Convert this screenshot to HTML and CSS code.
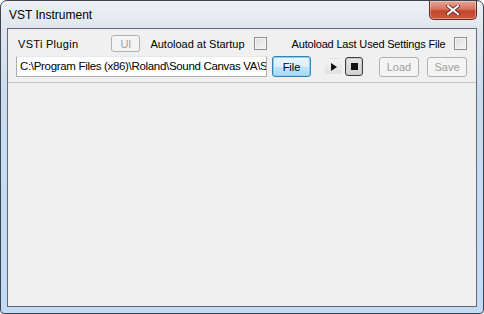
FILE: index.html
```html
<!doctype html>
<html lang="en">
    <head>
        <meta charset="UTF-8" />
        <title>VST Instrument</title>
        <link rel="stylesheet" href="styles.css">
    </head>
    <body>
        <div class="window">
            <div class="titlebar">
                <span class="title">VST Instrument</span>
                <div class="close">
                    <svg width="14" height="10" viewBox="0 0 14 10">
                        <path d="M2 1 L12 9 M12 1 L2 9" stroke="#5a2020" stroke-width="3.6" stroke-linecap="square" />
                        <path d="M2 1 L12 9 M12 1 L2 9" stroke="#fff" stroke-width="2" stroke-linecap="square" />
                    </svg>
                </div>
            </div>
            <div class="client">
                <div class="row">
                    <span class="label plugin">VSTi Plugin</span>
                    <button class="btn small" disabled>UI</button>
                    <span class="label startup">Autoload at Startup</span>
                    <span class="check"></span>
                    <span class="label last">Autoload Last Used Settings File</span>
                    <span class="check"></span>
                </div>
                <div class="row path-row">
                    <div class="path"><span>C:\Program Files (x86)\Roland\Sound Canvas VA\S</span></div>
                    <button class="btn file">File</button>
                    <button class="btn flat play">
                        <svg width="6" height="8" viewBox="0 0 6 8"><path d="M0 0 L6 4 L0 8 Z" fill="#111" /></svg>
                    </button>
                    <button class="btn stop">
                        <svg width="7" height="7" viewBox="0 0 7 7"><rect width="7" height="7" fill="#111" /></svg>
                    </button>
                    <button class="btn wide" disabled>Load</button>
                    <button class="btn wide save" disabled>Save</button>
                </div>
                <div class="sep"></div>
            </div>
        </div>
    </body>
</html>
```

FILE: styles.css
```css
body {
    margin: 0;
    font-family: "Liberation Sans", Arial, sans-serif;
    font-size: 11px;
    color: #000;
}
.window {
    width: 484px;
    height: 314px;
    box-sizing: border-box;
    border: 1px solid #3c4450;
    border-radius: 7px 7px 4px 4px;
    padding: 0 6px 6px 6px;
    display: flex;
    flex-direction: column;
    background: linear-gradient(to bottom, #eef1f5 0px, #dfe5ec 30px, #c9dcf0 90px, #c2dbf5 100%);
}
.titlebar {
    height: 27px;
    display: flex;
    justify-content: space-between;
    align-items: flex-start;
}
.title {
    font-family: "Liberation Sans", Arial, sans-serif;
    font-size: 12px;
    margin: 7px 0 0 2px;
    color: #000;
}
.close {
    width: 46px;
    height: 18px;
    border: 1px solid #5e2a22;
    border-top: none;
    border-radius: 0 0 5px 5px;
    background: linear-gradient(to bottom, #e7a596 0%, #d77361 45%, #c2442c 55%, #cd5a3f 100%);
    display: flex;
    align-items: center;
    justify-content: center;
    box-shadow: inset 0 0 0 1px rgba(255, 255, 255, 0.35);
}
.client {
    flex: 1;
    background: #f0f0f0;
    border: 1px solid #5f6a76;
    display: flex;
    flex-direction: column;
}
.row {
    display: flex;
    align-items: center;
    height: 17px;
    margin-top: 6px;
    padding-left: 10px;
}
.label {
    white-space: nowrap;
}
.plugin {
    letter-spacing: 0.3px;
}
.btn {
    font-family: "Liberation Sans", Arial, sans-serif;
    font-size: 11px;
    height: 21px;
    box-sizing: border-box;
    border: 1px solid #707070;
    border-radius: 3px;
    background: linear-gradient(to bottom, #f2f2f2 0%, #ebebeb 50%, #dddddd 51%, #cfcfcf 100%);
    padding: 0;
    color: #000;
    display: flex;
    align-items: center;
    justify-content: center;
}
.btn:disabled {
    background: #f4f4f4;
    border-color: #adb2b5;
    color: #a0a0a0;
}
.small {
    width: 29px;
    height: 17px;
    margin-left: 33px;
}
.startup {
    margin-left: 10px;
}
.check {
    width: 11px;
    height: 11px;
    border: 1px solid #8e8f8f;
    background: linear-gradient(135deg, #dcdcdc 0%, #f6f6f6 100%);
    box-shadow: inset 0 0 0 1px #f4f4f4;
    margin-left: 9px;
}
.last {
    margin-left: 25px;
    letter-spacing: -0.18px;
}
.path-row {
    height: 21px;
    margin-top: 4px;
    padding-left: 8px;
}
.path {
    width: 251px;
    height: 21px;
    box-sizing: border-box;
    border: 1px solid #abadb3;
    border-top-color: #e3e9ef;
    background: #fff;
    padding: 3px 0 0 3px;
    white-space: nowrap;
    overflow: hidden;
    font-size: 11.5px;
    letter-spacing: -0.32px;
}
.file {
    width: 39px;
    margin-left: 5px;
    border-color: #3c7fb1;
    background: linear-gradient(to bottom, #eaf6fd 0%, #d9f0fc 50%, #bee6fd 51%, #a7d9f5 100%);
    box-shadow: inset 0 0 0 1px #8ed0f5;
}
.flat {
    width: 17px;
    height: 17px;
    margin-left: 14px;
    border-color: transparent;
    background: linear-gradient(to bottom, #f4f4f4 0%, #e0e0e0 100%);
}
.stop {
    width: 18px;
    height: 19px;
    margin-left: 3px;
    border-color: #3e3e3e;
    background: linear-gradient(to bottom, #e6e6e6 0%, #d0d0d0 100%);
    box-shadow: inset 0 0 0 1px #c9c9c9;
}
.wide {
    width: 40px;
    height: 20px;
    margin-left: 16px;
}
.save {
    margin-left: 8px;
}
.sep {
    margin-top: 5px;
    border-top: 1px solid #c6c6c6;
}
```
